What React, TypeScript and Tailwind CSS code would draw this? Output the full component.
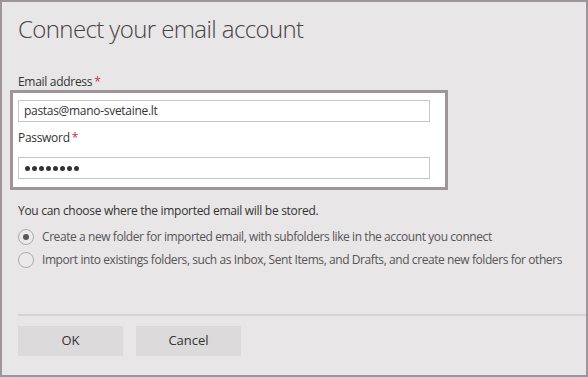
import React from "react";

const Required = () => <span className="ml-[2px] text-[#c4314b]">*</span>;

const Radio = ({ checked, label }: { checked?: boolean; label: string }) => (
  <label className="flex h-[23px] items-center gap-[8px] whitespace-nowrap tracking-[-0.42px] text-[#555]">
    <span className="flex h-[16px] w-[16px] shrink-0 items-center justify-center rounded-full border border-[#aeabad] bg-[#ebe9ea]">
      {checked && <span className="h-[6px] w-[6px] rounded-full bg-[#5a5859]" />}
    </span>
    <span>{label}</span>
  </label>
);

export default function App() {
  return (
    <div className="flex h-[377px] w-[588px] flex-col border-2 border-[#9e959a] bg-[#e8e6e7] pl-4 font-['Open_Sans',sans-serif] text-[12px] tracking-[-0.3px] text-[#333]">
      <h1 className="mt-[11px] text-[24px] font-light leading-[32px] tracking-[-0.6px] text-[#444]">
        Connect your email account
      </h1>

      <div className="mt-[29px] leading-[16px]">
        Email address
        <Required />
      </div>

      {/* highlighted credentials block */}
      <div className="-ml-2 w-[438px] border-[3px] border-[#9e949a] bg-white pb-[8px] pl-[5px] pt-[7px]">
        <div className="flex h-[22px] w-[412px] items-center border border-[#c6c6c6] bg-white px-[5px]">
          pastas@mano-svetaine.lt
        </div>
        <div className="mt-[8px] leading-[16px]">
          Password
          <Required />
        </div>
        <div className="mt-[11px] flex h-[22px] w-[412px] items-center gap-[2px] border border-[#c6c6c6] bg-white px-[6px]">
          {Array.from({ length: 8 }).map((_, i) => (
            <span key={i} className="h-[5px] w-[5px] rounded-full bg-[#333]" />
          ))}
        </div>
      </div>

      <p className="mt-[13px] leading-[16px]">You can choose where the imported email will be stored.</p>
      <div className="mt-[6px] flex flex-col">
        <Radio checked label="Create a new folder for imported email, with subfolders like in the account you connect" />
        <Radio label="Import into existings folders, such as Inbox, Sent Items, and Drafts, and create new folders for others" />
      </div>

      <div className="mt-auto border-t-2 border-[#d6d3d4] pb-[19px] pt-[10px]">
        <div className="flex gap-[13px]">
          <button className="h-[30px] w-[105px] bg-[#dcdadb] text-[13px] font-medium tracking-normal text-[#333]">OK</button>
          <button className="h-[30px] w-[105px] bg-[#dcdadb] text-[13px] font-medium tracking-normal text-[#333]">Cancel</button>
        </div>
      </div>
    </div>
  );
}
